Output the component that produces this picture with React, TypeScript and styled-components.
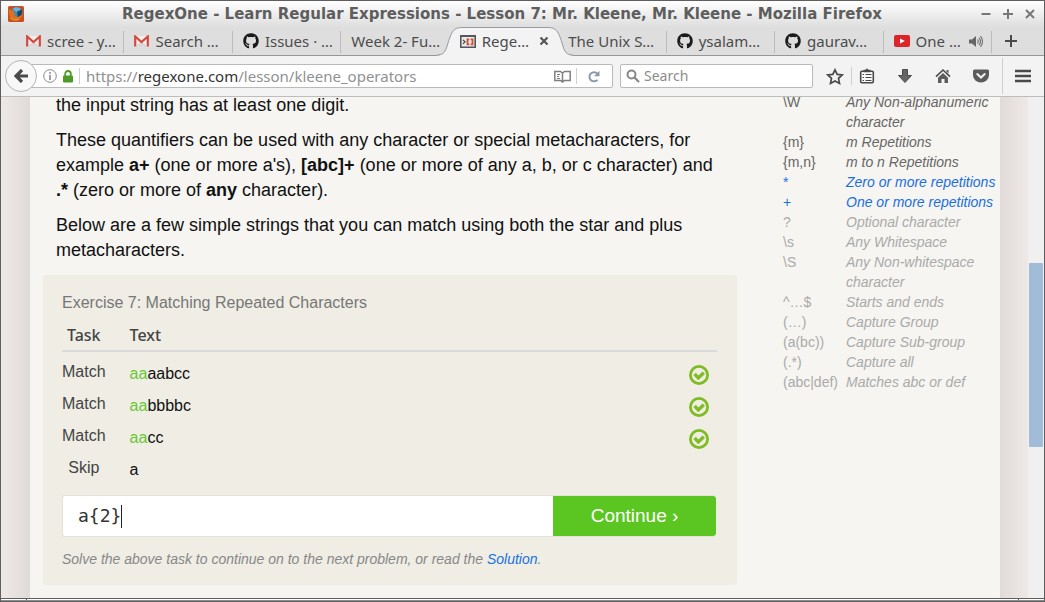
import React from "react";
import styled, { createGlobalStyle } from "styled-components";
import { FaGithub } from "react-icons/fa";

const sans = '"Liberation Sans", Arial, sans-serif';
const ui = '"Noto Sans", "Open Sans", sans-serif';

const GlobalStyle = createGlobalStyle`
  *, *::before, *::after { box-sizing: border-box; }
  body { margin: 0; background: #f6f5f1; font-family: ${sans}; }
  button { padding: 0; border: 0; background: none; font: inherit; color: inherit; cursor: pointer; }
  svg { display: block; flex: none; }
`;

const Window = styled.div`
  display: flex;
  flex-direction: column;
  height: 100vh;
  border: 1px solid #5e5e5e;
  overflow: hidden;
`;

const Chrome = styled.header`
  flex: none;
  background: linear-gradient(#fff, #dedede 26px, #dedede);
`;

const TitleBar = styled.div`
  display: flex;
  align-items: center;
  height: 26px;
  padding: 0 8px 0 7px;
`;

const Title = styled.h1`
  flex: 1;
  margin: 0;
  font: bold 15px/22px "DejaVu Sans", sans-serif;
  color: #5e5e5e;
  text-align: center;
  white-space: nowrap;
  overflow: hidden;
`;

const WindowButtons = styled.div`
  display: flex;
  gap: 10px;
`;

const TabStrip = styled.nav`
  display: flex;
  height: 29px;
  padding-left: 15px;
  border-bottom: 1px solid #979797;
`;

const Tabs = styled.div`
  display: grid;
  grid-template-columns: repeat(9, minmax(0, 1fr));
  flex: 1;
`;

const Tab = styled.div<{ $active?: boolean; $divider?: boolean }>`
  position: relative;
  display: flex;
  align-items: center;
  padding: 0 9px 0 10px;
  z-index: ${(p) => (p.$active ? 1 : 0)};
  &::after {
    content: "";
    position: absolute;
    right: 0;
    top: 4px;
    bottom: 2px;
    width: 1px;
    background: ${(p) => (p.$divider ? "#bcbcbc" : "transparent")};
  }
`;

const TabButton = styled.button`
  position: relative;
  display: flex;
  align-items: center;
  gap: 6px;
  flex: 1;
  min-width: 0;
  font: 15px/20px ${ui};
  color: #4c4c4c;
  white-space: nowrap;
`;

const TabShape = styled.div`
  position: absolute;
  top: 0;
  bottom: -1px;
  left: -13px;
  right: -15px;
  display: flex;
`;

const TabShapeTop = styled.div`
  flex: 1;
  background: #f3f3f3;
  border-top: 1px solid #979ba1;
`;

const IconButton = styled.button`
  position: relative;
  display: flex;
  align-items: center;
  justify-content: center;
`;

const NewTab = styled(IconButton)`
  width: 38px;
  margin-right: 14px;
`;

const Toolbar = styled.div`
  display: flex;
  align-items: center;
  height: 41px;
  padding: 0 13px 0 4px;
  background: #f3f3f3;
  border-bottom: 1px solid #bdbdbd;
`;

const BackButton = styled(IconButton)`
  flex: none;
  width: 32px;
  height: 32px;
  border: 1px solid #b4b4b4;
  border-radius: 50%;
  background: #f8f8f8;
  z-index: 1;
`;

const Field = styled.div`
  display: flex;
  align-items: center;
  height: 24px;
  background: #fff;
  border: 1px solid #bababa;
  border-radius: 2px;
`;

const AddressField = styled(Field)`
  flex: 1;
  gap: 5px;
  margin-left: -16px;
  padding: 0 8px 0 21px;
  min-width: 0;
`;

const SearchField = styled(Field)`
  width: 193px;
  margin-left: 7px;
  padding: 0 5px;
  gap: 4px;
`;

const Address = styled.span`
  flex: 1;
  padding-left: 1px;
  font: 15px/20px ${ui};
  color: #919191;
  white-space: nowrap;
  overflow: hidden;
  b { font-weight: 400; color: #333; }
`;

const SearchInput = styled.input`
  flex: 1;
  min-width: 0;
  padding: 0;
  border: 0;
  outline: 0;
  background: transparent;
  font: 14px/20px ${ui};
  &::placeholder { color: #8c8c8c; opacity: 1; }
`;

const Divider = styled.span<{ $height: number }>`
  flex: none;
  width: 1px;
  height: ${(p) => p.$height}px;
  background: #cfcfcf;
`;

const Actions = styled.div`
  display: flex;
  align-items: center;
  gap: 22px;
  margin-left: 13px;
`;

const StarGroup = styled.div`
  display: flex;
  align-items: center;
  gap: 7px;
`;

const MenuGroup = styled.div`
  display: flex;
  align-items: center;
  gap: 12px;
  margin-left: 13px;
`;

const Viewport = styled.main`
  display: flex;
  flex: 1;
  min-height: 0;
  overflow: hidden;
`;

const Gutter = styled.div<{ $side: "left" | "right" }>`
  flex: none;
  width: ${(p) => (p.$side === "left" ? 29 : 28)}px;
  background: linear-gradient(to ${(p) => p.$side}, #e0dad8, #e7e2df 50%, #eee8e6);
`;

const Sheet = styled.div`
  display: grid;
  grid-template-columns: minmax(0, 1fr) 217px;
  column-gap: 46px;
  flex: 1;
  padding-left: 13px;
  background: #f6f5f1;
`;

const Article = styled.article`
  margin-top: -4px;
`;

const Paragraph = styled.p`
  margin: 0 0 10px;
  padding: 0 13px;
  font-size: 18px;
  line-height: 25px;
  color: #111;
`;

const Exercise = styled.section`
  margin-top: 12px;
  padding: 17px 20px 16px 19px;
  background: #efede4;
  border-radius: 3px;
`;

const ExerciseTitle = styled.h2`
  margin: 0;
  font-size: 16px;
  font-weight: 400;
  line-height: 22px;
  color: #777;
`;

const TaskTable = styled.table`
  width: 100%;
  border-collapse: collapse;
  tbody::before {
    content: "";
    display: block;
    height: 6px;
  }
`;

const HeadCell = styled.th<{ $align?: "center" }>`
  height: 37px;
  padding: 8px 0 3px ${(p) => (p.$align ? 0 : 24)}px;
  border-bottom: 2px solid #dadadc;
  font: 500 16px/24px ${ui};
  color: #444;
  text-align: ${(p) => p.$align ?? "left"};
`;

const TaskCell = styled.td`
  width: 43px;
  height: 32px;
  padding: 0 0 4px;
  font-size: 16px;
  line-height: 20px;
  color: #444;
  text-align: center;
`;

const TextCell = styled.td`
  padding: 0 0 0 24px;
  font-size: 16px;
  line-height: 20px;
  color: #111;
`;

const ResultCell = styled.td`
  width: 28px;
  padding: 2px 8px 0 0;
`;

const Matched = styled.span`
  color: #67c936;
`;

const AnswerForm = styled.form`
  display: flex;
  height: 42px;
  margin: 9px 1px 12px 0;
  background: #fff;
  border: 1px solid #e4e2da;
  border-right: 0;
  border-radius: 3px;
`;

const AnswerLabel = styled.label`
  display: flex;
  align-items: center;
  flex: 1;
  padding-left: 15px;
`;

const AnswerInput = styled.input`
  field-sizing: content;
  padding: 0;
  border: 0;
  outline: 0;
  background: transparent;
  font: 18px/24px "DejaVu Sans Mono", monospace;
  color: #333;
`;

const Caret = styled.span`
  width: 1px;
  height: 23px;
  background: #222;
`;

const ContinueButton = styled.button`
  width: 163px;
  background: #5bc621;
  border-radius: 0 3px 3px 0;
  font-family: ${sans};
  font-size: 19px;
  line-height: 24px;
  color: #fff;
`;

const Hint = styled.p`
  margin: 0;
  font-size: 14px;
  font-style: italic;
  line-height: 20px;
  color: #888;
`;

const Link = styled.a`
  color: #1a73e0;
  text-decoration: none;
`;

const Reference = styled.table`
  align-self: start;
  width: 100%;
  margin-top: -5px;
  border-collapse: collapse;
  font-size: 14px;
  line-height: 20px;
`;

type State = "known" | "current" | "next";
const stateColor: Record<State, string> = {
  known: "#666",
  current: "#1a6fe0",
  next: "#aaa",
};

const ReferenceRow = styled.tr<{ $state: State }>`
  color: ${(p) => stateColor[p.$state]};
  vertical-align: top;
`;

const Token = styled.th`
  width: 63px;
  padding: 0;
  font-weight: 400;
  text-align: left;
  white-space: nowrap;
`;

const Meaning = styled.td`
  padding: 0;
  font-style: italic;
`;

const Scrollbar = styled.div`
  flex: none;
  width: 16px;
  padding: 166px 1px 0;
  background: #f0f0f0;
`;

const Thumb = styled.div`
  height: 184px;
  background: #a1bcd6;
  border-radius: 1px;
`;

const Frame = styled.footer`
  display: flex;
  justify-content: space-between;
  flex: none;
  height: 3px;
  padding: 0 25px;
  border-top: 1px solid #5e5e5e;
  border-bottom: 1px solid #8c8c8c;
  background: #fff;
`;

const Grip = styled.span`
  width: 1px;
  background: #5e5e5e;
`;

const GmailIcon = () => (
  <svg width="15" height="12" viewBox="0 0 15 12">
    <path d="M1 1h13v10H1z" fill="#f3eeee" />
    <path d="M2 11 7.500 6.500 13 11z" fill="#dcd6d6" />
    <path d="M1.200 11.500V1.500L7.500 7l6.300-5.500v10" fill="none" stroke="#d5493d" strokeWidth="2.200" />
  </svg>
);

const RegexIcon = () => (
  <svg width="16" height="13" viewBox="0 0 16 13">
    <path d="M.800.800h14.400v11.400H.800z" fill="#e9e9e9" stroke="#55565e" strokeWidth="1.600" />
    <path d="M0 0h16v2H0z" fill="#55565e" />
    <path d="m3 4.800 2 2-2 2" fill="none" stroke="#444" strokeWidth="1.200" />
    <path d="M9.300 4.300H7.500v5h1.800M10.700 4.300h1.800v5h-1.800" fill="none" stroke="#d2502c" strokeWidth="1.800" />
  </svg>
);

const YoutubeIcon = () => (
  <svg width="16" height="12" viewBox="0 0 16 12">
    <rect width="16" height="12" rx="2" fill="#dc2429" />
    <path d="m6 3.500 4.800 2.500-4.800 2.500z" fill="#fff" />
  </svg>
);

const SpeakerIcon = () => (
  <svg width="14" height="13" viewBox="0 0 14 13">
    <path d="M0 4.500h3L7 1v11L3 8.500H0z" fill="#666" />
    <path d="M8.500 4.500q1.500 2 0 4M10 2.800q3 3.700 0 7.400M11.500 1.200q4 5.300 0 10.600" fill="none" stroke="#777" strokeWidth="1.200" />
  </svg>
);

const FirefoxIcon = () => (
  <svg width="16" height="16" viewBox="0 0 16 16">
    <rect width="16" height="16" rx="1.500" fill="#c94f1e" />
    <circle cx="8.500" cy="7.300" r="6.300" fill="#3c86b8" />
    <path d="M5 2.500q4-2.500 8 .500l-2 3-4-.500z" fill="#6fb1d3" />
    <path d="M9.500 5q3 0 4-2 1.500 3.500 0 6.500-2 3-5 3 2-2 1-5z" fill="#1c4560" />
    <path d="M1 2.500 3 4.500q2-.8 3 .2-1 1.300-.3 2.300l2.300.2q-.4 1.600-2 2 2.500 2.500 5.500 1 2.500-1 3-3.200.5 5.200-4.500 6.700-5 1-7.800-2.700Q.200 7.500 1 2.500z" fill="#e2711d" />
    <path d="M2 12q4 3.500 9 1.500" fill="none" stroke="#f3a63c" />
  </svg>
);

const OctocatIcon = () => <FaGithub size={16} color="#1b1b1b" />;

const CheckIcon = () => (
  <svg width="20" height="20" viewBox="0 0 20 20" role="img" aria-label="Matched">
    <circle cx="10" cy="10" r="8.600" fill="none" stroke="#7fbb23" strokeWidth="2.800" />
    <path d="m5.600 9 3.700 3.900 5.500-5.200" fill="none" stroke="#7fbb23" strokeWidth="3.400" />
  </svg>
);

type TabInfo = {
  label: string;
  icon?: React.ReactNode;
  active?: boolean;
  divider?: boolean;
  audio?: boolean;
};

const tabs: TabInfo[] = [
  { label: "scree - y…", icon: <GmailIcon />, divider: true },
  { label: "Search …", icon: <GmailIcon />, divider: true },
  { label: "Issues · …", icon: <OctocatIcon />, divider: true },
  { label: "Week 2- Fu…" },
  { label: "Rege…", icon: <RegexIcon />, active: true },
  { label: "The Unix S…", divider: true },
  { label: "ysalam…", icon: <OctocatIcon />, divider: true },
  { label: "gaurav…", icon: <OctocatIcon />, divider: true },
  { label: "One …", icon: <YoutubeIcon />, divider: true, audio: true },
];

const tasks = [
  { task: "Match", hit: "aa", rest: "aabcc" },
  { task: "Match", hit: "aa", rest: "bbbbc" },
  { task: "Match", hit: "aa", rest: "cc" },
  { task: "Skip", hit: "", rest: "a" },
];

const reference: [string, string, State][] = [
  ["\\W", "Any Non-alphanumeric character", "known"],
  ["{m}", "m Repetitions", "known"],
  ["{m,n}", "m to n Repetitions", "known"],
  ["*", "Zero or more repetitions", "current"],
  ["+", "One or more repetitions", "current"],
  ["?", "Optional character", "next"],
  ["\\s", "Any Whitespace", "next"],
  ["\\S", "Any Non-whitespace character", "next"],
  ["^…$", "Starts and ends", "next"],
  ["(…)", "Capture Group", "next"],
  ["(a(bc))", "Capture Sub-group", "next"],
  ["(.*)", "Capture all", "next"],
  ["(abc|def)", "Matches abc or def", "next"],
];

const BrowserTab = ({ tab }: { tab: TabInfo }) => (
  <Tab $active={tab.active} $divider={tab.divider}>
    {tab.active && (
      <TabShape>
        <svg width="26" height="29" viewBox="0 0 26 29">
          <path d="M0 28.500C10 28.500 9 20 13 10 16 2 19 .500 26 .500V29H0z" fill="#f3f3f3" />
          <path d="M0 28C10 28 9 20 13 10 16 2 19 .500 26 .500" fill="none" stroke="#979ba1" />
        </svg>
        <TabShapeTop />
        <svg width="26" height="29" viewBox="0 0 26 29">
          <path d="M26 28.500C16 28.500 17 20 13 10 10 2 7 .500 0 .500V29H26z" fill="#f3f3f3" />
          <path d="M26 28C16 28 17 20 13 10 10 2 7 .500 0 .500" fill="none" stroke="#979ba1" />
        </svg>
      </TabShape>
    )}
    <TabButton>
      {tab.icon}
      {tab.label}
    </TabButton>
    {tab.active && (
      <IconButton aria-label="Close tab">
        <svg width="10" height="10" viewBox="0 0 10 10">
          <path d="m1.500 1.500 7 7m0-7-7 7" stroke="#555" strokeWidth="2.200" />
        </svg>
      </IconButton>
    )}
    {tab.audio && (
      <IconButton aria-label="Mute tab">
        <SpeakerIcon />
      </IconButton>
    )}
  </Tab>
);

export default function App() {
  const [answer, setAnswer] = React.useState("a{2}");
  return (
    <>
      <GlobalStyle />
      <Window>
        <Chrome>
          <TitleBar>
            <FirefoxIcon />
            <Title>RegexOne - Learn Regular Expressions - Lesson 7: Mr. Kleene, Mr. Kleene - Mozilla Firefox</Title>
            <WindowButtons>
              <IconButton aria-label="Minimize">
                <svg width="12" height="12" viewBox="0 0 12 12">
                  <path d="M1.500 6h9" stroke="#777" strokeWidth="2" />
                </svg>
              </IconButton>
              <IconButton aria-label="Maximize">
                <svg width="12" height="12" viewBox="0 0 12 12">
                  <path d="M1 6h10M6 1v10" stroke="#777" strokeWidth="2" />
                </svg>
              </IconButton>
              <IconButton aria-label="Close">
                <svg width="12" height="12" viewBox="0 0 12 12">
                  <path d="m2 2 8 8m0-8-8 8" stroke="#777" strokeWidth="2" />
                </svg>
              </IconButton>
            </WindowButtons>
          </TitleBar>
          <TabStrip>
            <Tabs>
              {tabs.map((tab) => (
                <BrowserTab key={tab.label} tab={tab} />
              ))}
            </Tabs>
            <NewTab aria-label="New tab">
              <svg width="12" height="12" viewBox="0 0 12 12">
                <path d="M0 6h12M6 0v12" stroke="#4a4a4a" strokeWidth="2" />
              </svg>
            </NewTab>
          </TabStrip>
          <Toolbar>
            <BackButton aria-label="Back">
              <svg width="14" height="14" viewBox="0 0 14 14">
                <path d="M14 7H3M8 1 2 7l6 6" fill="none" stroke="#4a4a4a" strokeWidth="3.200" />
              </svg>
            </BackButton>
            <AddressField>
              <svg width="14" height="14" viewBox="0 0 14 14">
                <circle cx="7" cy="7" r="6.300" fill="none" stroke="#8a8a8a" />
                <path d="M7 3v1.700M7 6v5" stroke="#8a8a8a" strokeWidth="1.600" />
              </svg>
              <svg width="12" height="13" viewBox="0 0 12 13">
                <path d="M3.200 6V3.800a2.800 2.800 0 0 1 5.600 0V6" fill="none" stroke="#4d9a28" strokeWidth="1.800" />
                <rect x="1" y="5.500" width="10" height="7" rx="1" fill="#4d9a28" />
              </svg>
              <Divider $height={16} />
              <Address>
                https://<b>regexone.com</b>/lesson/kleene_operators
              </Address>
              <IconButton aria-label="Reader view">
                <svg width="17" height="13" viewBox="0 0 17 13">
                  <path d="M.800 1.500h5.700L8.500 3l2-1.500h5.700v9h-5.700l-2 1.500-2-1.500H.800zM8.500 3v8" fill="none" stroke="#808080" strokeWidth="1.500" />
                  <path d="M3 4.500h3M3 6.500h2M3 8.500h3" stroke="#808080" />
                </svg>
              </IconButton>
              <Divider $height={16} />
              <IconButton aria-label="Reload">
                <svg width="22" height="13" viewBox="0 0 22 13">
                  <path d="M14.500 9.800a4.600 4.600 0 1 1-.2-6.300" transform="translate(1 0)" fill="none" stroke="#8b9aaa" strokeWidth="2" />
                  <path d="M17.500 .800v5.500h-5.500z" fill="#8b9aaa" />
                </svg>
              </IconButton>
            </AddressField>
            <SearchField>
              <svg width="14" height="14" viewBox="0 0 14 14">
                <circle cx="5.500" cy="5.500" r="4" fill="none" stroke="#888" strokeWidth="2" />
                <path d="m8.500 8.500 4.500 4.500" stroke="#888" strokeWidth="2.200" />
              </svg>
              <SearchInput aria-label="Search" placeholder="Search" />
            </SearchField>
            <Actions>
              <StarGroup>
                <IconButton aria-label="Bookmark this page">
                  <svg width="18" height="17" viewBox="0 0 18 17">
                    <path d="m9 1.800 2.200 4.600 5 .6-3.700 3.400 1 5L9 13l-4.500 2.400 1-5L1.800 7l5-.6z" fill="none" stroke="#4a4a4a" strokeWidth="1.700" />
                  </svg>
                </IconButton>
                <Divider $height={18} />
                <IconButton aria-label="Show bookmarks">
                  <svg width="16" height="16" viewBox="0 0 16 16">
                    <rect x="1.700" y="3.300" width="12.600" height="11.500" rx="1.200" fill="#fafafa" stroke="#4a4a4a" strokeWidth="1.600" />
                    <path d="M4.500 1.700h2.200L8 .300l1.300 1.400h2.200v2.500h-7z" fill="#4a4a4a" />
                    <path d="M3.500 6.500H5M6.500 6.500h6M3.500 9.500H5M6.500 9.500h6M3.500 12.500H5M6.500 12.500h6" stroke="#4a4a4a" strokeWidth="1.100" />
                  </svg>
                </IconButton>
              </StarGroup>
              <IconButton aria-label="Downloads">
                <svg width="16" height="16" viewBox="0 0 16 16">
                  <path d="M5.500 1.500h5v6h4L8 14.500 1.500 7.500h4z" fill="#666" stroke="#4a4a4a" strokeLinejoin="round" />
                </svg>
              </IconButton>
              <IconButton aria-label="Home">
                <svg width="16" height="16" viewBox="0 0 16 16">
                  <path d="M1 8.700 8 2l7 6.700" fill="none" stroke="#4a4a4a" strokeWidth="1.600" />
                  <path d="M11.500 2h2v3.500l-2-2zM8 5l5 4.700V15H9.500v-4h-3v4H3V9.700z" fill="#5c5c5c" />
                </svg>
              </IconButton>
              <IconButton aria-label="Save to Pocket">
                <svg width="16" height="16" viewBox="0 0 16 16">
                  <path d="M1.500 1.500h13q1.500 0 1.500 1.500v4a8 7.500 0 0 1-16 0V3q0-1.500 1.500-1.500z" fill="#5c5c5c" />
                  <path d="m4.300 6 3.700 3.500L11.700 6" fill="none" stroke="#f3f3f3" strokeWidth="2" strokeLinecap="round" />
                </svg>
              </IconButton>
            </Actions>
            <MenuGroup>
              <Divider $height={36} />
              <IconButton aria-label="Open menu">
                <svg width="16" height="14" viewBox="0 0 16 14">
                  <path d="M0 2h16M0 7h16M0 12h16" stroke="#4a4a4a" strokeWidth="2.600" />
                </svg>
              </IconButton>
            </MenuGroup>
          </Toolbar>
        </Chrome>

        <Viewport>
          <Gutter $side="left" />
          <Sheet>
            <Article>
              <Paragraph>the input string has at least one digit.</Paragraph>
              <Paragraph>
                These quantifiers can be used with any character or special metacharacters, for example{" "}
                <b>a+</b> (one or more a's), <b>[abc]+</b> (one or more of any a, b, or c character) and{" "}
                <b>.*</b> (zero or more of <b>any</b> character).
              </Paragraph>
              <Paragraph>
                Below are a few simple strings that you can match using both the star and plus
                metacharacters.
              </Paragraph>
              <Exercise>
                <ExerciseTitle>Exercise 7: Matching Repeated Characters</ExerciseTitle>
                <TaskTable>
                  <thead>
                    <tr>
                      <HeadCell $align="center">Task</HeadCell>
                      <HeadCell colSpan={2}>Text</HeadCell>
                    </tr>
                  </thead>
                  <tbody>
                    {tasks.map(({ task, hit, rest }) => (
                      <tr key={hit + rest}>
                        <TaskCell>{task}</TaskCell>
                        <TextCell>
                          <Matched>{hit}</Matched>
                          {rest}
                        </TextCell>
                        <ResultCell>{hit && <CheckIcon />}</ResultCell>
                      </tr>
                    ))}
                  </tbody>
                </TaskTable>
                <AnswerForm onSubmit={(e) => e.preventDefault()}>
                  <AnswerLabel>
                    <AnswerInput
                      aria-label="Your pattern"
                      value={answer}
                      onChange={(e) => setAnswer(e.target.value)}
                    />
                    <Caret />
                  </AnswerLabel>
                  <ContinueButton type="submit">Continue ›</ContinueButton>
                </AnswerForm>
                <Hint>
                  Solve the above task to continue on to the next problem, or read the{" "}
                  <Link href="#solution">Solution</Link>.
                </Hint>
              </Exercise>
            </Article>
            <Reference>
              <tbody>
                {reference.map(([token, meaning, state]) => (
                  <ReferenceRow key={token} $state={state}>
                    <Token scope="row">{token}</Token>
                    <Meaning>{meaning}</Meaning>
                  </ReferenceRow>
                ))}
              </tbody>
            </Reference>
          </Sheet>
          <Gutter $side="right" />
          <Scrollbar>
            <Thumb />
          </Scrollbar>
        </Viewport>
        <Frame>
          <Grip />
          <Grip />
        </Frame>
      </Window>
    </>
  );
}
